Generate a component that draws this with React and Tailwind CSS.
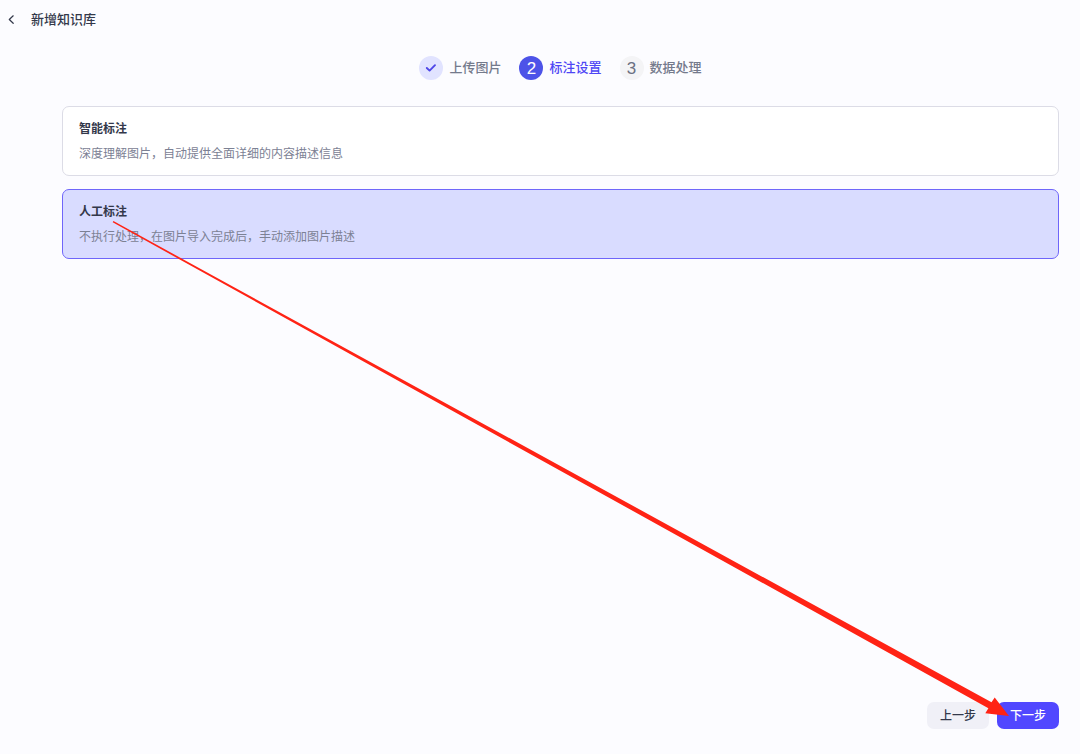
import { useState } from "react";
import clsx from "clsx";

const STEPS = [
  { id: 1, label: "上传图片" },
  { id: 2, label: "标注设置" },
  { id: 3, label: "数据处理" },
];

const MODES = [
  {
    value: "auto",
    title: "智能标注",
    desc: "深度理解图片，自动提供全面详细的内容描述信息",
  },
  {
    value: "manual",
    title: "人工标注",
    desc: "不执行处理，在图片导入完成后，手动添加图片描述",
  },
];

function Step({ id, label, current }) {
  const done = id < current;
  const active = id === current;
  return (
    <li className="flex items-center gap-1.5" aria-current={active ? "step" : undefined}>
      <span
        className={clsx(
          "flex size-6 items-center justify-center rounded-full text-[17px] leading-none",
          done && "bg-[#e1e3ff] text-[#4e46e8]",
          active && "bg-[#4d53e8] text-white",
          !done && !active && "bg-[#f4f4f6] text-[#6b7082]"
        )}
      >
        {done ? (
          <svg width="12" height="12" viewBox="0 0 12 12" fill="none" aria-hidden="true">
            <path
              d="M1.8 6 4.6 8.6 10 3.2"
              stroke="currentColor"
              strokeWidth="1.9"
              strokeLinecap="round"
              strokeLinejoin="round"
            />
          </svg>
        ) : (
          id
        )}
      </span>
      <span
        className={clsx(
          "text-[13px] leading-5 font-medium",
          active ? "text-[#4e46f5]" : "text-[#747a8c]"
        )}
      >
        {label}
      </span>
    </li>
  );
}

function ModeCard({ mode, checked, onChange }) {
  return (
    <label
      className={clsx(
        "block cursor-pointer rounded-[7px] border px-4 pt-3 pb-[11px]",
        checked ? "border-[#6f66fa] bg-[#d9dcff]" : "border-[#dcdce6] bg-white"
      )}
    >
      <input
        type="radio"
        name="mode"
        value={mode.value}
        checked={checked}
        onChange={onChange}
        className="sr-only"
      />
      <span className="block text-[12px] leading-5 font-bold text-[#33384a]">
        {mode.title}
      </span>
      <span className="mt-[5px] block text-[12px] leading-5 text-[#7c8194]">
        {mode.desc}
      </span>
    </label>
  );
}

export default function App() {
  const [mode, setMode] = useState("manual");

  return (
    <div className="relative flex min-h-screen flex-col bg-[#fcfcff] font-['Liberation_Sans','Noto_Sans_CJK_SC',sans-serif]">
      <header className="flex h-10 items-center gap-3 pl-1">
        <button type="button" aria-label="返回" className="p-1 text-[#33384a]">
          <svg width="7" height="10" viewBox="0 0 7 10" fill="none" aria-hidden="true">
            <path
              d="M5.2 .8 1.3 4.5l3.9 3.8"
              stroke="currentColor"
              strokeWidth="1.2"
              strokeLinecap="round"
              strokeLinejoin="round"
            />
          </svg>
        </button>
        <h1 className="text-[13px] leading-5 font-medium text-[#33384a]">新增知识库</h1>
      </header>

      <main className="flex flex-1 flex-col pt-4 pr-[21px] pl-[62px]">
        <ol className="flex justify-center gap-[18px]">
          {STEPS.map((step) => (
            <Step key={step.id} {...step} current={2} />
          ))}
        </ol>

        <div className="mt-[26px] flex flex-col gap-[13px]" role="radiogroup" aria-label="标注设置">
          {MODES.map((item) => (
            <ModeCard
              key={item.value}
              mode={item}
              checked={mode === item.value}
              onChange={() => setMode(item.value)}
            />
          ))}
        </div>

        <div className="mt-auto flex justify-end gap-2 pb-[25px]">
          <button
            type="button"
            className="h-[27px] rounded-[7px] bg-[#f0f0f7] px-[13px] text-[12px] font-medium text-[#33384a]"
          >
            上一步
          </button>
          <button
            type="button"
            className="h-[27px] rounded-[7px] bg-[#5147ff] px-[13px] text-[12px] font-medium text-white"
          >
            下一步
          </button>
        </div>
      </main>

      {/* pointer from the chosen mode to the next button */}
      <svg
        className="pointer-events-none absolute inset-0 size-full"
        viewBox="0 0 1080 754"
        preserveAspectRatio="none"
        fill="#ff2315"
        aria-hidden="true"
      >
        <path d="M113.4 221.1 991.5 702.3 994.7 697.5 1009 716 985.3 713.2 988.4 708.2 112.7 222.3Z" />
      </svg>
    </div>
  );
}
